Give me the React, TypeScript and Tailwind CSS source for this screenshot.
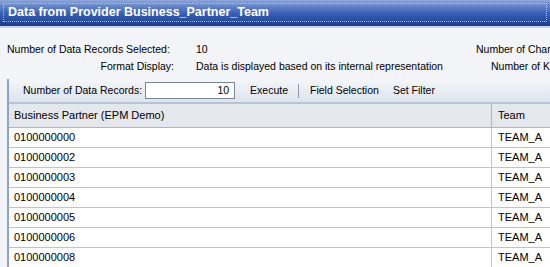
const rows = [
  "0100000000",
  "0100000002",
  "0100000003",
  "0100000004",
  "0100000005",
  "0100000006",
  "0100000008",
];

export default function App() {
  return (
    <div
      className="w-[550px] h-[267px] overflow-hidden bg-[#f2f4f7] text-[11px] text-black"
      style={{ fontFamily: '"Liberation Sans", Arial, sans-serif' }}
    >
      {/* title bar */}
      <div className="h-[26px] bg-gradient-to-b from-[#8ea6d6] via-[#3b60b8] to-[#1c3e8e] p-[3px] pb-[4px]">
        <div className="h-full border border-dotted border-[#c9c48a] flex items-center pl-[4px]">
          <span className="text-white font-bold text-[12.5px]">
            Data from Provider Business_Partner_Team
          </span>
        </div>
      </div>
      <div className="h-[2px] bg-[#c6d2e6]" />

      {/* info block */}
      <div className="h-[51px] pt-[13px] text-[10.5px]">
        <div className="flex h-[17px] items-center">
          <div className="w-[196px] pl-[7px]">Number of Data Records Selected:</div>
          <div>10</div>
          <div className="ml-auto w-[74px] whitespace-nowrap overflow-hidden">Number of Characteristics</div>
        </div>
        <div className="flex h-[17px] items-center">
          <div className="w-[174px] text-right">Format Display:</div>
          <div className="ml-[22px]">Data is displayed based on its internal representation</div>
          <div className="ml-auto w-[59px] whitespace-nowrap overflow-hidden">Number of Key Figures</div>
        </div>
      </div>

      {/* toolbar + table */}
      <div className="ml-[7px] border-l-2 border-[#8aa4cc]">
        <div className="h-[25px] flex items-center bg-gradient-to-b from-[#f4f6f9] to-[#dde4ed] border-b-2 border-[#b3c4dc] pl-[14px] text-[10.5px]">
          <span>Number of Data Records:</span>
          <div className="ml-[3px] w-[90px] h-[17px] border border-[#7b8595] bg-white text-right pr-[5px] leading-[15px]">
            10
          </div>
          <span className="ml-[15px]">Execute</span>
          <span className="ml-[10px] w-px h-[14px] bg-[#8a98ad]" />
          <span className="ml-[11px]">Field Selection</span>
          <span className="ml-[14px]">Set Filter</span>
        </div>
        <div className="flex h-[24px] items-center bg-[#e4e7eb] border-b border-[#a7b6cc]">
          <div className="w-[483px] pl-[5px] h-full flex items-center border-r border-[#a9b6c9]">
            Business Partner (EPM Demo)
          </div>
          <div className="pl-[6px]">Team</div>
        </div>
        {rows.map((r) => (
          <div key={r} className="flex h-[20px] items-center bg-white border-b border-[#b7c5db]">
            <div className="w-[483px] pl-[5px] h-full flex items-center border-r border-[#bcc7d8]">{r}</div>
            <div className="pl-[6px]">TEAM_A</div>
          </div>
        ))}
      </div>
    </div>
  );
}
